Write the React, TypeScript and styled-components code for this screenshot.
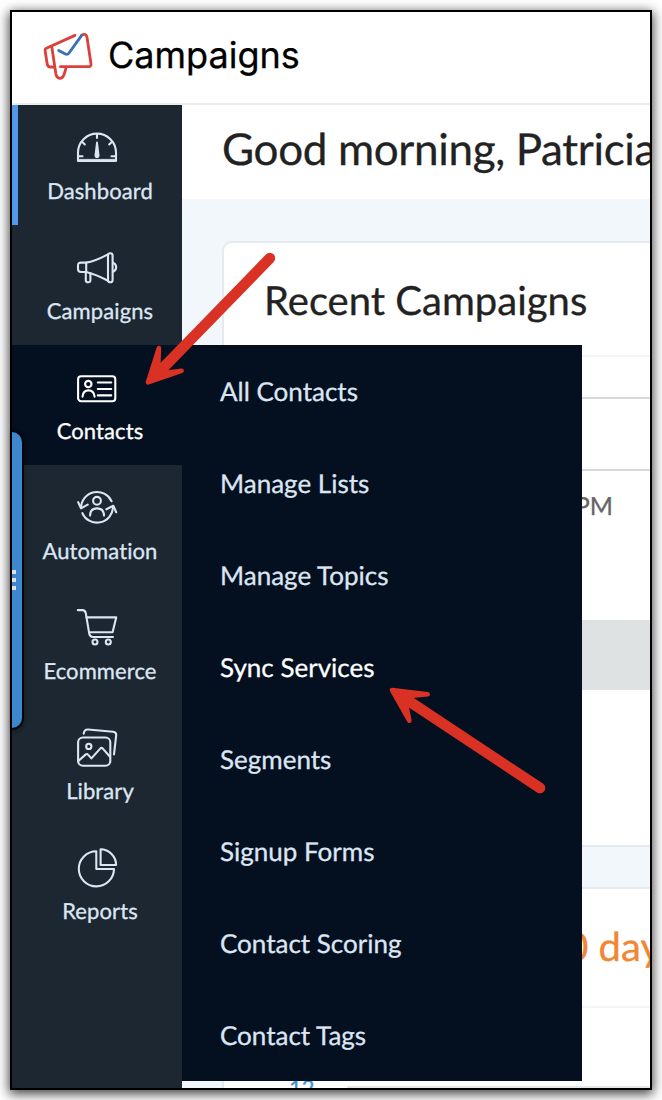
import React from "react";
import styled, { createGlobalStyle } from "styled-components";

const GlobalStyle = createGlobalStyle`
  * { box-sizing: border-box; }
  body {
    margin: 0;
    background: #fff;
    font-family: Lato, "Liberation Sans", sans-serif;
    text-rendering: geometricPrecision;
    -webkit-text-stroke: 0.3px currentColor;
  }
`;

const Page = styled.div`
  position: relative;
  width: 662px;
  height: 1100px;
  padding: 10px;
  overflow: hidden;
`;

const Window = styled.div`
  position: relative;
  display: flex;
  flex-direction: column;
  width: 642px;
  height: 1080px;
  border: 2px solid #000;
  background: #fff;
  box-shadow: 0 3px 11px 1px rgba(0, 0, 0, 0.75);
`;

const Header = styled.header`
  display: flex;
  align-items: center;
  gap: 14px;
  height: 93px;
  flex: none;
  padding: 0 0 2px 30px;
  border-bottom: 2px solid #ededed;
`;

const Brand = styled.span`
  margin-top: -3px;
  font-family: Inter, "Liberation Sans", sans-serif;
  font-size: 36px;
  line-height: 44px;
  color: #000;
`;

const Body = styled.div`
  display: flex;
  flex: 1;
  min-height: 0;
`;

const Sidebar = styled.nav`
  position: relative;
  z-index: 1;
  width: 170px;
  flex: none;
  background: #1c2731;
`;

const NavItem = styled.div<{ $state?: "current" | "open" }>`
  position: relative;
  display: flex;
  flex-direction: column;
  align-items: center;
  height: 120px;
  padding-top: 23px;
  border-left: 6px solid ${(p) => (p.$state === "current" ? "#5399e9" : "transparent")};
  background: ${(p) => (p.$state === "open" ? "#040f1f" : "transparent")};
  color: ${(p) => (p.$state === "open" ? "#fff" : "#dce6f3")};
`;

const NavIcon = styled.svg`
  width: 40px;
  height: 40px;
  margin-right: 6px;
  overflow: visible;
  fill: none;
  stroke: currentColor;
  stroke-width: 2.1;
  stroke-linecap: round;
  stroke-linejoin: round;
`;

const NavLabel = styled.span`
  margin-top: 10px;
  font-size: 22px;
  line-height: 26px;
  letter-spacing: 0.1px;
  white-space: nowrap;
`;

const Flyout = styled.div`
  position: absolute;
  left: 164px;
  top: 0;
  width: 400px;
  background: #040f1f;
`;

const FlyoutItem = styled.div<{ $active?: boolean }>`
  display: flex;
  align-items: center;
  height: 92px;
  padding: 0 0 0 38px;
  font-size: 26px;
  line-height: 32px;
  color: ${(p) => (p.$active ? "#fff" : "#dce6f3")};
`;

const Main = styled.main`
  display: flex;
  flex-direction: column;
  flex: 1;
  min-width: 0;
  overflow: hidden;
  background: #f2f7fb;
`;

const Greeting = styled.h1`
  margin: 0;
  height: 94px;
  flex: none;
  padding: 17px 0 0 40px;
  background: #fff;
  color: #222;
  font-size: 44px;
  line-height: 54px;
  font-weight: 400;
  letter-spacing: -0.35px;
  white-space: nowrap;
`;

const Card = styled.section<{ $height: number; $gap: number }>`
  flex: none;
  height: ${(p) => p.$height}px;
  margin: ${(p) => p.$gap}px 0 0 40px;
  border: 2px solid #e5e9f0;
  border-right: 0;
  border-radius: 10px 0 0 10px;
  background: #fff;
  overflow: hidden;
`;

const CardTitle = styled.h2<{ $height: number; $accent?: boolean }>`
  display: flex;
  align-items: center;
  justify-content: ${(p) => (p.$accent ? "flex-end" : "flex-start")};
  height: ${(p) => p.$height}px;
  margin: 0;
  padding: ${(p) => (p.$accent ? "0 0 4px 40px" : "2px 0 0 40px")};
  border-bottom: 2px solid #f2f6f9;
  color: ${(p) => (p.$accent ? "#ef8733" : "#222")};
  font-size: 40px;
  font-weight: 400;
  white-space: nowrap;
`;

const AccentText = styled.span`
  margin-right: -28px;
`;

const Filter = styled.div`
  height: 74px;
  margin-top: 40px;
  border: 2px solid #d8d8d8;
  border-width: 2px 0;
`;

const SentTime = styled.div`
  height: 70px;
  padding: 20px 37px 0 0;
  color: #666;
  font-size: 25px;
  line-height: 30px;
  text-align: right;
`;

const Band = styled.div`
  height: 70px;
  margin-top: 79px;
  background: #dee2e2;
`;

const Axis = styled.div`
  display: flex;
  gap: 32px;
  padding: 67px 0 0 65px;
  color: #3f92d3;
  font-size: 22px;
  line-height: 26px;
`;

const AxisLine = styled.i`
  flex: 1;
  height: 2px;
  margin-top: 11px;
  background: #e6e6e6;
`;

const Handle = styled.div`
  position: absolute;
  z-index: 2;
  left: 0;
  top: 418px;
  display: flex;
  flex-direction: column;
  justify-content: center;
  gap: 4px;
  width: 12px;
  height: 300px;
  border: 2px solid #02060c;
  border-left: 0;
  border-radius: 0 12px 12px 0;
  background: #3d87cf;
  box-shadow: 0 2px 5px rgba(0, 0, 0, 0.3);
`;

const Dot = styled.i`
  width: 4px;
  height: 4px;
  background: #dfe1e2;
`;

const Arrows = styled.svg`
  position: absolute;
  z-index: 3;
  inset: 0;
  pointer-events: none;
`;

const Logo = () => (
  <svg width="52" height="52" viewBox="0 0 52 52" fill="none" strokeWidth="2.8" strokeLinecap="round" strokeLinejoin="round">
    <g stroke="#dc403b">
      <path d="M33 4.4 4.9 17Q2.8 18 3.1 19.8L5.2 33Q5.7 36 8.2 36H12.4" />
      <path d="M9.8 16 13.9 43Q14.8 47.2 17.7 47.3T21.9 44L24 37.2" />
      <path d="M18.4 35.7H46.8Q49.3 35.6 49 33L45 6.3Q44.4 3.3 42.2 3.3T39.4 4.4" />
    </g>
    <path stroke="#3a70b8" d="M16.7 19.4 23.4 23Q25.6 24 27 22L39.5 4.6" />
  </svg>
);

const icons: Record<string, React.ReactNode> = {
  Dashboard: (
    <>
      <path d="M1 33V24.6a19 19 0 0 1 38 0V33Z" />
      <path d="M2 31.4H38" strokeWidth="1" />
      <path d="M20 6V10M5.8 14.4 7.8 16.4M34.2 14.4 32.2 16.4M2 28.3H5.5M38 28.3H34.5" />
      <path d="M20 13.2Q20.8 13.2 21 15L22.5 27.2Q22.5 30 20 30T17.5 27.2L19 15Q19.2 13.2 20 13.2Z" fill="currentColor" stroke="none" />
    </>
  ),
  Campaigns: (
    <>
      <path d="M9.2 14.6H4Q1 14.6 1 17.6V21Q1 24 4 24H9.2Z" />
      <path d="M9.2 14.6Q17.5 13.6 31 6.4M9.2 24Q19 26.4 31 32.8" />
      <rect x="31" y="5.2" width="4.6" height="29" rx="2.3" />
      <path d="M36 14.8Q39.2 16.2 39.2 19.3T36 23.8" />
      <path d="M8.8 24V32.2Q8.8 34.3 11.1 34.3T13.4 32.2V25.4" />
    </>
  ),
  Contacts: (
    <>
      <rect x="1.1" y="8.2" width="37.2" height="25" rx="3" />
      <circle cx="11.3" cy="16.1" r="3.2" />
      <path d="M5.5 28.6Q6.2 22.4 11.5 22.4T17.6 28.6M20.8 14.5H34.2M20.8 21H34.2M20.8 27.4H34.2" />
    </>
  ),
  Automation: (
    <>
      <path d="M4.1 19.5A16 16 0 0 1 34.6 13.2M5.4 25.2A16 16 0 0 0 36 18.8" />
      <path d="M1.2 14.2 4 20.4 10.7 16.6M29.4 21.3 36.3 17.8 39.2 24.2" />
      <circle cx="20" cy="12.8" r="3.9" />
      <path d="M13.1 27.6Q13.1 20.4 20 20.4T27 27.6" />
    </>
  ),
  Ecommerce: (
    <>
      <path d="M.8 2.1H5.4Q8.2 2.1 8.8 5.2L12.2 25.4Q12.8 29 15.8 29H36" />
      <path d="M9.5 9.4H39.2L35.6 24.2H12" />
      <circle cx="18" cy="34" r="2.5" />
      <circle cx="31.3" cy="34" r="2.5" />
    </>
  ),
  Library: (
    <>
      <rect x="1.1" y="9.5" width="32.2" height="28.2" rx="4.8" />
      <circle cx="11.8" cy="18.4" r="2.6" />
      <path d="M1.6 32.8 8.8 26.4Q10 25.4 11 26.6L14.4 30.4 23.2 20.6Q24.4 19.2 25.8 20.6L33 28.8" />
      <path d="M6.7 5.6Q7.4 1.3 11 1.5L36.2 3.8Q39.4 4.4 39.2 7.2L37 26.4" />
    </>
  ),
  Reports: (
    <>
      <path d="M19.3 3.2A17.6 17.6 0 1 0 37 21H19.3Z" />
      <path d="M23.6 1.3A15.8 15.8 0 0 1 39.1 17H23.6Z" />
    </>
  ),
};

const menu = [
  "All Contacts",
  "Manage Lists",
  "Manage Topics",
  "Sync Services",
  "Segments",
  "Signup Forms",
  "Contact Scoring",
  "Contact Tags",
];

const stateOf = (name: string) =>
  name === "Dashboard" ? "current" : name === "Contacts" ? "open" : undefined;

export default function App() {
  return (
    <Page>
      <GlobalStyle />
      <Window>
        <Header>
          <Logo />
          <Brand>Campaigns</Brand>
        </Header>
        <Body>
          <Sidebar>
            {Object.keys(icons).map((name) => (
              <NavItem key={name} $state={stateOf(name)}>
                <NavIcon viewBox="0 0 40 40">{icons[name]}</NavIcon>
                <NavLabel>{name}</NavLabel>
                {name === "Contacts" && (
                  <Flyout>
                    {menu.map((entry) => (
                      <FlyoutItem key={entry} $active={entry === "Sync Services"}>
                        {entry}
                      </FlyoutItem>
                    ))}
                  </Flyout>
                )}
              </NavItem>
            ))}
          </Sidebar>
          <Main>
            <Greeting>Good morning, Patricia</Greeting>
            <Card $height={606} $gap={42}>
              <CardTitle $height={114}>Recent Campaigns</CardTitle>
              <Filter />
              <SentTime>PM</SentTime>
              <Band />
            </Card>
            <Card $height={240} $gap={40}>
              <CardTitle $height={119} $accent>
                <AccentText>30 days</AccentText>
              </CardTitle>
              <Axis>
                12
                <AxisLine />
              </Axis>
            </Card>
          </Main>
        </Body>
        <Handle>
          <Dot />
          <Dot />
          <Dot />
        </Handle>
      </Window>
      <Arrows width="662" height="1100" viewBox="0 0 662 1100" fill="#d93124" stroke="#d93124" strokeLinejoin="round">
        <path d="M148 382.3 158.9 348 158.3 365.5 165.5 372.8 181.6 370.8Z" strokeWidth="4.6" />
        <path d="M163.5 367.5 269.8 258.2" strokeWidth="10.8" strokeLinecap="round" />
        <path d="M392 690 427.7 694.3 410 696 405.7 702.7 409.4 720.8Z" strokeWidth="4.6" />
        <path d="M411 702.5 540 788" strokeWidth="10.6" strokeLinecap="round" />
      </Arrows>
    </Page>
  );
}
